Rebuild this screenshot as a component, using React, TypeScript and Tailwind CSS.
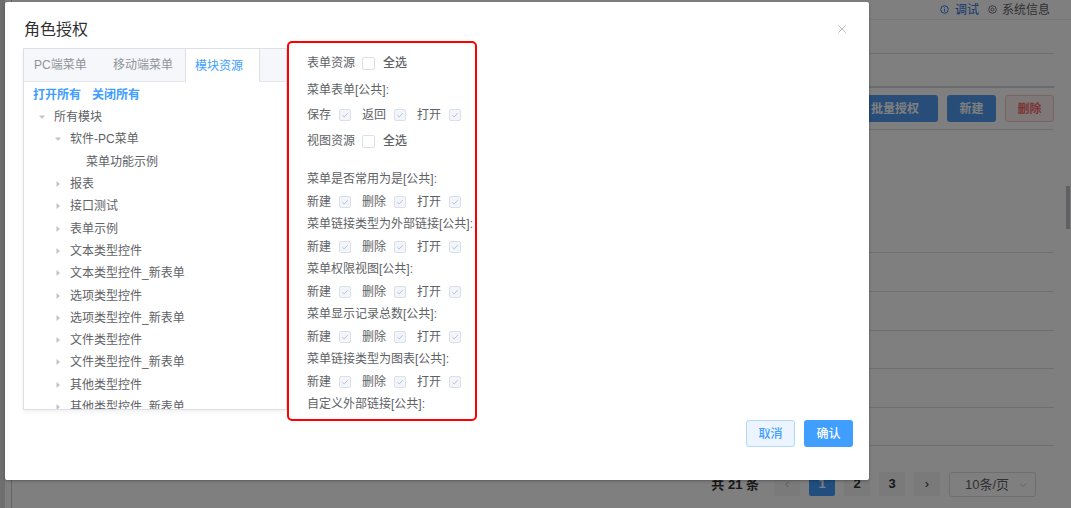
import { X } from "lucide-react";

const font = { fontFamily: '"Liberation Sans", "Noto Sans CJK SC", sans-serif' };

type Node = { label: string; level: number; open?: boolean; leaf?: boolean };

const treeNodes: Node[] = [
  { label: "所有模块", level: 0, open: true },
  { label: "软件-PC菜单", level: 1, open: true },
  { label: "菜单功能示例", level: 2, leaf: true },
  { label: "报表", level: 1 },
  { label: "接口测试", level: 1 },
  { label: "表单示例", level: 1 },
  { label: "文本类型控件", level: 1 },
  { label: "文本类型控件_新表单", level: 1 },
  { label: "选项类型控件", level: 1 },
  { label: "选项类型控件_新表单", level: 1 },
  { label: "文件类型控件", level: 1 },
  { label: "文件类型控件_新表单", level: 1 },
  { label: "其他类型控件", level: 1 },
  { label: "其他类型控件_新表单", level: 1 },
];

const groups = [
  "菜单是否常用为是[公共]:",
  "菜单链接类型为外部链接[公共]:",
  "菜单权限视图[公共]:",
  "菜单显示记录总数[公共]:",
  "菜单链接类型为图表[公共]:",
];

function Caret({ open }: { open?: boolean }) {
  return (
    <svg width="12" height="12" viewBox="0 0 12 12" className={open ? "rotate-90" : ""}>
      <path d="M4.5 3 L8 6 L4.5 9 Z" fill="#c0c4cc" />
    </svg>
  );
}

function EmptyBox() {
  return <span className="inline-block w-[13px] h-[13px] border border-[#dcdfe6] rounded-[2px] bg-white" />;
}

function DisabledChecked() {
  return (
    <span className="inline-flex items-center justify-center w-[12px] h-[12px] border border-[#dcdfe6] rounded-[2px] bg-[#f2f6fc]">
      <svg width="8" height="8" viewBox="0 0 8 8">
        <path d="M1.3 4.2 L3.2 6 L6.8 2" fill="none" stroke="#c0c4cc" strokeWidth="1" />
      </svg>
    </span>
  );
}

function CheckRow({ labels }: { labels: string[] }) {
  return (
    <div className="flex items-center h-full">
      {labels.map((l, i) => (
        <div key={i} className={`flex items-center ${i < labels.length - 1 ? "mr-[11px]" : ""}`}>
          <span className="mr-[8px]">{l}</span>
          <DisabledChecked />
        </div>
      ))}
    </div>
  );
}

function BackgroundPage() {
  return (
    <div className="absolute inset-0 flex bg-white">
      <div className="w-[5px] bg-[#dcdcdc]" />
      <div className="w-[7px] border-r border-[#c8c8c8]" />
      <div className="flex-1 flex flex-col">
        <div className="h-[20px] flex items-center justify-end pr-[21px] text-[12px] text-[#606266] border-b border-[#eeeeee]">
          <span className="flex items-center text-[#1f6fd8] mr-[9px]">
            <svg width="9" height="9" viewBox="0 0 10 10" className="mr-[6px]">
              <circle cx="5" cy="5" r="4.2" fill="none" stroke="#1f6fd8" strokeWidth="1" />
              <path d="M5 4.2 V7.3 M5 2.6 V3.3" stroke="#1f6fd8" strokeWidth="1" />
            </svg>
            调试
          </span>
          <span className="flex items-center">
            <svg width="9" height="9" viewBox="0 0 10 10" className="mr-[5px]">
              <circle cx="5" cy="5" r="4.2" fill="none" stroke="#606266" strokeWidth="1" />
              <circle cx="5" cy="5" r="1.6" fill="none" stroke="#606266" strokeWidth="1" />
            </svg>
            系统信息
          </span>
        </div>
        <div className="flex-1 flex">
          <div className="flex-1 flex flex-col">
            <div className="h-[34px] border-b border-[#dcdfe6]" />
            <div className="h-[34px] border-b-2 border-[#d3d6dc]" />
            <div className="h-[42px] border-b border-[#dcdfe6] flex items-center justify-end gap-[9px] text-[12px] font-bold">
              <span className="w-[86px] h-[27px] rounded-[3px] bg-[#4f9af0] text-white flex items-center justify-center">批量授权</span>
              <span className="w-[49px] h-[27px] rounded-[3px] bg-[#4f9af0] text-white flex items-center justify-center">新建</span>
              <span className="w-[49px] h-[27px] rounded-[3px] bg-[#fef0f0] border border-[#fbc4c4] text-[#f56c6c] flex items-center justify-center">删除</span>
            </div>
            <div className="h-[123px] border-b border-[#dcdfe6]" />
            <div className="h-[39px] border-b border-[#dcdfe6]" />
            <div className="h-[39px] border-b border-[#dcdfe6]" />
            <div className="h-[38px] border-b border-[#dcdfe6]" />
            <div className="h-[39px] border-b border-[#dcdfe6]" />
            <div className="h-[38px] border-b border-[#dcdfe6]" />
          </div>
          <div className="w-[17px] relative">
            <div className="absolute right-[1px] top-[166px] w-[4px] h-[43px] bg-[#bcc0c6]" />
          </div>
        </div>
        <div className="h-[42px] flex items-center justify-end pr-[35px] pb-[5px] text-[13px] text-[#303133] font-bold">
          <span className="mr-[15px]">共 21 条</span>
          <div className="flex gap-[9px]">
            <span className="w-[26px] h-[24px] rounded-[2px] bg-[#f4f4f5] text-[#c0c4cc] flex items-center justify-center font-normal">‹</span>
            <span className="w-[26px] h-[24px] rounded-[2px] bg-[#409eff] text-white flex items-center justify-center">1</span>
            <span className="w-[26px] h-[24px] rounded-[2px] bg-[#f4f4f5] flex items-center justify-center">2</span>
            <span className="w-[26px] h-[24px] rounded-[2px] bg-[#f4f4f5] flex items-center justify-center">3</span>
            <span className="w-[26px] h-[24px] rounded-[2px] bg-[#f4f4f5] flex items-center justify-center font-normal">›</span>
            <span className="w-[87px] h-[25px] rounded-[3px] border border-[#dcdfe6] flex items-center justify-between pl-[15px] pr-[8px] font-normal text-[#606266]">
              10条/页
              <svg width="8" height="6" viewBox="0 0 8 6">
                <path d="M1 1.5 L4 4.5 L7 1.5" fill="none" stroke="#c0c4cc" strokeWidth="1" />
              </svg>
            </span>
          </div>
        </div>
      </div>
    </div>
  );
}

export default function App() {
  return (
    <div style={font} className="relative w-[1071px] h-[508px] overflow-hidden">
      <BackgroundPage />
      <div className="absolute inset-0 bg-black/50" />

      {/* dialog */}
      <div className="absolute left-[5px] top-[2px] w-[864px] h-[478px] bg-white rounded-[2px] shadow-[0_1px_3px_rgba(0,0,0,0.3)]">
        <div className="h-[39px] relative pl-[19px] pt-[18px]">
          <div className="text-[16px] leading-[20px] text-[#303133]">角色授权</div>
          <X size={14} strokeWidth={1} color="#909399" className="absolute right-[20px] top-[20px]" />
        </div>

        <div className="flex items-start pl-[18px]">
          {/* tab card */}
          <div className="w-[264px] h-[362px] mt-[7px] border border-[#dcdfe6] shadow-[0_2px_4px_rgba(0,0,0,0.06)] flex flex-col overflow-hidden">
            <div className="h-[33px] flex bg-[#f5f7fa] border-b border-[#e4e7ed] text-[12px] text-[#909399] shrink-0">
              <div className="w-[80px] pl-[10px] flex items-center">PC端菜单</div>
              <div className="w-[81px] pl-[9px] flex items-center">移动端菜单</div>
              <div className="w-[75px] pl-[9px] flex items-center bg-white text-[#409eff] border-x border-[#dcdfe6] -mb-px">模块资源</div>
            </div>
            <div className="flex-1 overflow-hidden">
              <div className="h-[22px] flex items-end pl-[9px] text-[12px] font-bold text-[#409eff]">
                <span className="mr-[11px]">打开所有</span>
                <span>关闭所有</span>
              </div>
              <div className="mt-[2px] text-[12px] text-[#606266]">
                {treeNodes.map((n, i) => (
                  <div
                    key={i}
                    className={`h-[22.3px] flex items-center ${
                      n.level === 0 ? "pl-[12px]" : n.level === 1 ? "pl-[28px]" : "pl-[44px]"
                    }`}
                  >
                    <span className="w-[12px] h-[12px] mr-[6px] flex items-center justify-center">
                      {!n.leaf && <Caret open={n.open} />}
                    </span>
                    <span>{n.label}</span>
                  </div>
                ))}
              </div>
            </div>
          </div>

          {/* resource permissions */}
          <div className="w-[190px] h-[380px] border-2 border-[#ff0000] rounded-[5px] pl-[18px] pt-[9px] text-[12px] text-[#606266] overflow-hidden">
            <div className="h-[22px] mb-[5px] flex items-center">
              <span className="mr-[7px]">表单资源</span>
              <EmptyBox />
              <span className="ml-[8px] font-medium">全选</span>
            </div>
            <div className="h-[22px] mb-[3px] flex items-center">菜单表单[公共]:</div>
            <div className="h-[22px] mb-[4px]">
              <CheckRow labels={["保存", "返回", "打开"]} />
            </div>
            <div className="h-[22px] mb-[16px] flex items-center">
              <span className="mr-[7px]">视图资源</span>
              <EmptyBox />
              <span className="ml-[8px] font-medium">全选</span>
            </div>
            {groups.map((g, i) => (
              <div key={i}>
                <div className={`${i === 0 ? "h-[22px] mb-[0.5px]" : "h-[22.5px]"} flex items-center whitespace-nowrap`}>{g}</div>
                <div className="h-[22.5px]">
                  <CheckRow labels={["新建", "删除", "打开"]} />
                </div>
              </div>
            ))}
            <div className="h-[22.5px] flex items-center whitespace-nowrap">自定义外部链接[公共]:</div>
          </div>
        </div>

        <div className="flex justify-end gap-[9px] pr-[16px] -mt-[1px] text-[12px] font-medium">
          <button className="w-[49px] h-[27px] rounded-[3px] bg-[#ecf5ff] border border-[#b3d8ff] text-[#409eff]">取消</button>
          <button className="w-[49px] h-[27px] rounded-[3px] bg-[#409eff] text-white">确认</button>
        </div>
      </div>
    </div>
  );
}
